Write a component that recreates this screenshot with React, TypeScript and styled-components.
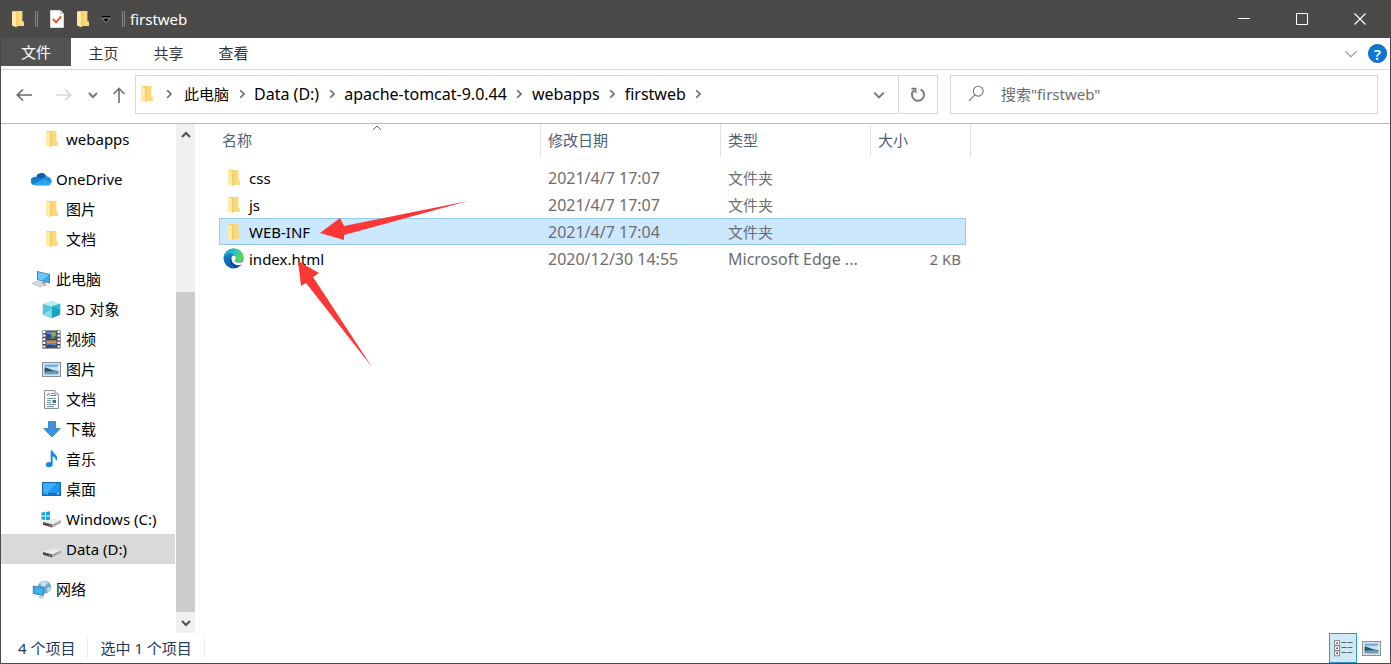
import React from 'react';
import styled, { createGlobalStyle, css } from 'styled-components';

const GlobalStyle = createGlobalStyle`
  *, *::before, *::after { box-sizing: border-box; }
  body { margin: 0; background: #fff; }
  body, button, input, table {
    font-family: 'Noto Sans', 'Noto Sans CJK SC', sans-serif;
    font-size: 15px;
    line-height: 20px;
  }
  button { padding: 0; border: 0; background: none; color: inherit; cursor: default; }
  a { color: inherit; text-decoration: none; }
  svg { display: block; flex: none; }
`;

const chrome = '#4c4a48';

const Window = styled.div`
  display: flex;
  flex-direction: column;
  min-height: 100vh;
  border: 1px solid ${chrome};
  border-top: 0;
  background: #fff;
  color: #000;
`;

const TitleBar = styled.header`
  display: flex;
  align-items: center;
  height: 38px;
  padding: 0 2px 0 11px;
  margin: 0 -1px;
  background: ${chrome};
  color: #fff;
`;

const QuickTools = styled.div`
  display: flex;
  align-items: center;
  gap: 12px;
  padding-left: 10px;
`;

const IconButton = styled.button`
  display: flex;
  align-items: center;
  justify-content: center;
`;

const TitleRule = styled.span`
  width: 3px;
  height: 16px;
  border: solid #85837f;
  border-width: 0 1px;
`;

const Title = styled.h1`
  flex: 1;
  margin: 0 0 0 5px;
  font-size: 15px;
  font-weight: 400;
`;

const CaptionButton = styled(IconButton)`
  width: 58px;
  height: 38px;
`;

const Ribbon = styled.nav`
  display: flex;
  height: 32px;
  border-bottom: 1px solid #dadbdc;
`;

const Tab = styled.button<{ $file?: boolean }>`
  width: ${(p) => (p.$file ? 70 : 65)}px;
  height: ${(p) => (p.$file ? 28 : 30)}px;
  color: ${(p) => (p.$file ? '#fff' : '#333')};
  background: ${(p) => (p.$file ? '#555351' : 'transparent')};
`;

const RibbonEnd = styled.div`
  display: flex;
  align-items: center;
  gap: 10px;
  margin-left: auto;
  padding-right: 3px;
`;

const HelpButton = styled(IconButton)`
  width: 19px;
  height: 19px;
  border-radius: 50%;
  border: 1px solid #0b5cad;
  background: #0a78d6;
  color: #fff;
  font-weight: 600;
`;

const NavigationBar = styled.div`
  display: flex;
  align-items: center;
  height: 54px;
  padding: 0 12px 4px 0;
  border-bottom: 1px solid #b9b9b9;
`;

const HistoryButtons = styled.div`
  display: flex;
  align-items: center;
  width: 134px;
  padding-left: 14px;
`;

const HistoryButton = styled(IconButton)<{ $gap?: number }>`
  height: 30px;
  margin-left: ${(p) => p.$gap ?? 0}px;
`;

const AddressBox = styled.div`
  display: flex;
  flex: 801 1 0;
  min-width: 0;
  height: 39px;
  border: 1px solid #d9d9d9;
`;

const Crumbs = styled.div`
  display: flex;
  align-items: center;
  flex: 1;
  min-width: 0;
  padding: 0 0 2px 4px;
  overflow: hidden;
  white-space: nowrap;
`;

const Crumb = styled.a<{ $latin: boolean }>`
  font-size: ${(p) => (p.$latin ? 16 : 15)}px;
`;

const CrumbChevron = styled.span<{ $wide?: boolean }>`
  display: flex;
  flex: none;
  justify-content: center;
  width: ${(p) => (p.$wide ? 30 : 25)}px;
`;

const AddressButton = styled(IconButton)<{ $ruled?: boolean }>`
  width: 39px;
  ${(p) => p.$ruled && css`border-left: 1px solid #d9d9d9;`}
`;

const SearchBox = styled.label`
  display: flex;
  align-items: center;
  gap: 16px;
  flex: 392 1 0;
  min-width: 0;
  height: 39px;
  margin-left: 12px;
  padding: 0 17px 2px;
  border: 1px solid #d9d9d9;
`;

const SearchInput = styled.input`
  flex: 1;
  min-width: 0;
  padding: 0;
  border: 0;
  outline: 0;
  background: none;
  &::placeholder { color: #6d6d6d; opacity: 1; }
`;

const Content = styled.main`
  display: flex;
  flex: 1;
`;

const Sidebar = styled.nav`
  width: 174px;
  flex: none;
  padding-bottom: 28px;
`;

const Group = styled.ul`
  margin: 0;
  padding: 0;
  list-style: none;
  & + & { margin-top: 10px; }
`;

const TreeLink = styled.a<{ $level: number; $selected?: boolean }>`
  display: flex;
  align-items: center;
  gap: 4px;
  height: 30px;
  padding-left: ${(p) => (p.$level === 0 ? 30 : 40)}px;
  background: ${(p) => (p.$selected ? '#d9d9d9' : 'transparent')};
  white-space: nowrap;
`;

const TreeIcon = styled.span`
  display: flex;
  justify-content: center;
  width: 21px;
`;

const ScrollBar = styled.div`
  display: flex;
  flex-direction: column;
  flex: none;
  width: 19px;
  margin-left: 1px;
  background: #f0f0f0;
`;

const ScrollButton = styled(IconButton)`
  height: 21px;
`;

const ScrollGap = styled.div`
  flex: 147 0 0;
`;

const ScrollThumb = styled.div`
  flex: 321 0 0;
  background: #cdcdcd;
`;

const FilePane = styled.section`
  position: relative;
  flex: 1;
  min-width: 0;
  margin-left: 4px;
  padding-left: 14px;
  border-left: 1px solid #f7f7f7;
`;

const FileTable = styled.table`
  width: 757px;
  table-layout: fixed;
  border-spacing: 0;
  tbody::before { content: ''; display: block; height: 7px; }
`;

const HeadCell = styled.th`
  position: relative;
  height: 33px;
  padding: 0 0 2px 7px;
  border-right: 1px solid #e2e2e2;
  color: #4c607a;
  font-weight: 400;
  text-align: left;
  &:first-child { padding-left: 8px; }
`;

const SortMark = styled.span`
  position: absolute;
  top: -1px;
  left: 0;
  right: 0;
  display: flex;
  justify-content: center;
`;

const FileRow = styled.tr<{ $selected?: boolean }>`
  td { height: 27px; padding: 0 0 0 7px; color: #6d6d6d; white-space: nowrap; }
  td:nth-child(2) { padding-left: 4px; color: #000; }
  td:first-child, td:last-child { padding: 0; }
  ${(p) =>
    p.$selected &&
    css`
      td:nth-child(n + 2) {
        background: #cce8ff;
        border: solid #99c9ec;
        border-width: 1px 0;
      }
      td:nth-child(2) { border-left-width: 1px; padding-left: 3px; }
      td:nth-child(5) { border-right-width: 1px; }
      td:last-child { background: none; border: 0; }
    `}
`;

const FileName = styled.span`
  display: flex;
  align-items: center;
  gap: 5px;
`;

const FileIcon = styled.span`
  display: flex;
  justify-content: center;
  width: 21px;
`;

const DetailCell = styled.td<{ $latin?: boolean }>`
  font-size: ${(p) => (p.$latin ? 16 : 15)}px;
`;

const SizeCell = styled.td`
  && { padding-right: 5px; text-align: right; }
`;

const Annotations = styled.svg`
  position: absolute;
  top: 76px;
  left: 96px;
  pointer-events: none;
`;

const StatusBar = styled.footer`
  display: flex;
  align-items: center;
  height: 30px;
  padding: 0 5px;
  color: #1e395b;
`;

const StatusText = styled.span`
  padding: 0 12px;
  border-right: 1px solid #ececec;
`;

const ViewButtons = styled.div`
  display: flex;
  margin-left: auto;
`;

const ViewButton = styled(IconButton)<{ $active?: boolean }>`
  width: 28px;
  height: 30px;
  ${(p) => p.$active && css`border: 1px solid #2a9cc4; background: #cfe9f7;`}
`;

function FolderIcon() {
  return (
    <svg width="14" height="18" viewBox="0 0 14 18" aria-hidden="true">
      <path d="M2 1h9v15H2z" fill="#f3cb60" />
      <path d="M6 1h5.4v10.5L13 13v3H6z" fill="#fbd977" />
      <path d="M1 1.2 5.2 2.6v14.6L1 15.6z" fill="#ffeaa9" />
      <path d="M5.2 2.6v14.6L7 16V1.4z" fill="#f6cf69" />
      <path d="M10.6 11.3h2.2V16h-2.2z" fill="#f9dc8c" />
    </svg>
  );
}

function Chevron({ dir, size = 10, color = '#666', width = 1.6 }: { dir: 'right' | 'down' | 'up'; size?: number; color?: string; width?: number }) {
  const d = { right: 'M3.2 1.2 7 5 3.2 8.8', down: 'M1 3 5 7 9 3', up: 'M1 7 5 3 9 7' }[dir];
  return (
    <svg width={size} height={size} viewBox="0 0 10 10" fill="none" stroke={color} strokeWidth={(width * 10) / size} aria-hidden="true">
      <path d={d} />
    </svg>
  );
}

function CheckDocIcon() {
  return (
    <svg width="14" height="18" viewBox="0 0 14 18" aria-hidden="true">
      <path d="M.5.5h10l3 3v14H.5z" fill="#fff" stroke="#d8d8d8" />
      <path d="M10.5.5v3h3" fill="#ddd" stroke="#aaa" strokeWidth=".7" />
      <path d="m3 9 3 3.3 5.2-6" fill="none" stroke="#d9552b" strokeWidth="1.9" />
    </svg>
  );
}

function CustomizeIcon() {
  return (
    <svg width="8" height="7" viewBox="0 0 8 7" aria-hidden="true">
      <path d="M0 .6h8" stroke="#000" strokeWidth="1.2" />
      <path d="M.3 2.2h7.4L4 6.8z" fill="#000" stroke="#ccc" strokeWidth=".6" />
    </svg>
  );
}

function ArrowIcon({ dir, color }: { dir: 'left' | 'right' | 'up'; color: string }) {
  const d = {
    left: 'M17 9H2M8 3.500 2.300 9 8 14.500',
    right: 'M1 9h15M10 3.500 15.700 9 10 14.500',
    up: 'M9 17V2M3.6 8 9 2.4 14.4 8',
  }[dir];
  return (
    <svg width="18" height="18" viewBox="0 0 18 18" fill="none" stroke={color} strokeWidth="1.7" aria-hidden="true">
      <path d={d} />
    </svg>
  );
}

function RefreshIcon() {
  return (
    <svg width="16" height="17" viewBox="0 0 16 17" fill="none" stroke="#7a7a7a" strokeWidth="2" aria-hidden="true">
      <path d="M10.6 3.4A6 6 0 1 1 4.4 4" />
      <path d="M1.4 2.6h4.2v4.4" strokeWidth="1.6" />
    </svg>
  );
}

function SearchIcon() {
  return (
    <svg width="17" height="17" viewBox="0 0 17 17" fill="none" stroke="#767676" strokeWidth="1.1" aria-hidden="true">
      <circle cx="10.3" cy="6.2" r="4.9" />
      <path d="M6.9 9.8.9 15.8" />
    </svg>
  );
}

function CloudIcon() {
  return (
    <svg width="21" height="14" viewBox="0 0 21 14" aria-hidden="true">
      <path d="M5.2 5A5.3 5.3 0 0 1 15 3.6l1 2.2-5 3-6-3.8z" fill="#0f5fb5" />
      <path d="M4.8 4.9c1.4-.2 2.6.1 3.8.8l5 3.1L3 13.2A4.2 4.2 0 0 1 4.8 4.9z" fill="#1380cf" />
      <path d="M14.9 4.6c3.2-.2 5.6 1.8 5.8 4.3.1 1-.3 2-.8 2.8l-8.8-4.5c1-1.500 2.200-2.400 3.800-2.600z" fill="#1a93e0" />
      <path d="m2 12.300 9.300-5c2.800 1.200 5.600 2.800 8.500 4.600-.7 1-1.800 1.500-3 1.500H4.600c-1 0-1.900-.4-2.600-1.100z" fill="#2ba3ee" />
    </svg>
  );
}

function ComputerIcon() {
  return (
    <svg width="21" height="18" viewBox="0 0 21 18" aria-hidden="true">
      <path d="m6 1 13 3v9.600L6 10z" fill="#4f7fa3" />
      <path d="m7 2.200 11 2.600v7.500L7 9.200z" fill="#38a9f0" />
      <path d="m7 2.200 11 2.600-7 5.600-4-1.200z" fill="#6cc6fa" />
      <path d="m11 11.500 4 1.200-.5 1.800-3.500-1z" fill="#8f9aa3" />
      <path d="m1 13.500 5-2.300 8.500 2.800-5 3z" fill="#d5dadd" stroke="#a8afb4" strokeWidth=".6" />
      <path d="m12.500 14 3.500.6-1.400 1.600-3-.6z" fill="#b9c0c5" />
    </svg>
  );
}

function CubeIcon() {
  return (
    <svg width="19" height="19" viewBox="0 0 19 19" aria-hidden="true">
      <path d="m.8 3.700 8.700-3 8.700 3-8.700 2.800z" fill="#b9eef5" />
      <path d="M.8 3.700 9.500 6.500v11.800L.8 14.800z" fill="#56c5dc" />
      <path d="m18.200 3.700-8.700 2.800v11.800l8.700-3.500z" fill="#14a5c5" />
      <path d="M.8 14.800 9.500 9v9.300z" fill="#85dbe9" />
      <path d="m9.500 6.500 8.700-2.800v6z" fill="#3ab9d3" />
    </svg>
  );
}

function FilmIcon() {
  return (
    <svg width="19" height="19" viewBox="0 0 19 19" aria-hidden="true">
      <path d="M.5.5h18v18H.5z" fill="#3c3c3c" />
      <path d="M2.300 1v18M16.700 1v18" stroke="#fff" strokeWidth="2.400" strokeDasharray="2.200 1.400" />
      <path d="M4.500 1.500h10v7h-10zM4.500 10.500h10v7h-10z" fill="#5b86cb" />
      <path d="M4.500 4.200c3-2 5 3.200 10 1v3.300h-10z" fill="#33478c" />
      <circle cx="11.500" cy="4.600" r="2.400" fill="#a6a64a" />
      <path d="m8 8.500 2.500-3L14 8.500z" fill="#6c9b3d" />
      <path d="M4.500 10.500h10v2.800c-4-1.500-7 2-10-1z" fill="#c78b4c" />
      <path d="M4.500 15.500c4-2.500 6 1 10-.5v2.500h-10z" fill="#30457f" />
    </svg>
  );
}

function PictureIcon() {
  return (
    <svg width="19" height="15" viewBox="0 0 19 15" aria-hidden="true">
      <path d="M.6.6h17.800v13.800H.6z" fill="#fff" stroke="#858f98" strokeWidth="1.200" />
      <path d="M2.500 2.500h14v10h-14z" fill="#c4e2f5" />
      <path d="M2.500 2.500h14v1.800c-3 .8-8 .6-14 .2z" fill="#6ca8df" />
      <path d="M2.500 5.500c4 0 6 2.800 14 3.800v1.200h-14z" fill="#2c5b68" />
      <path d="M2.500 10c4-1.200 9-.8 14-.5v3h-14z" fill="#6f9cb3" />
    </svg>
  );
}

function DocumentIcon() {
  return (
    <svg width="15" height="19" viewBox="0 0 15 19" aria-hidden="true">
      <path d="M.6.6h10.200l3.600 3.600v14.200H.6z" fill="#fff" stroke="#7f8790" />
      <path d="M10.800.6v3.600h3.600" fill="#dfe5ea" stroke="#7f8790" strokeWidth=".8" />
      <path d="m3 6 1.500-3L6 6M7 3.500h3M7 5.500h5" fill="none" stroke="#3c8ecb" />
      <path d="M3 8.500h9M3 10.500h4M3 12.500h4M3 14.500h9M3 16.500h7" stroke="#7497b4" />
      <path d="M8.500 10h3.500v3H8.500z" fill="#486f8b" />
    </svg>
  );
}

function DownloadIcon() {
  return (
    <svg width="18" height="17" viewBox="0 0 18 17" aria-hidden="true">
      <path d="M5.500.6h7v7h4.700L9 16 .8 7.600h4.700z" fill="#3d91e0" stroke="#2d77bd" strokeWidth=".8" />
    </svg>
  );
}

function MusicIcon() {
  return (
    <svg width="13" height="18" viewBox="0 0 13 18" aria-hidden="true">
      <ellipse cx="4.200" cy="14.600" rx="3.400" ry="2.700" fill="#1689e6" />
      <path d="M5.700.5h1.900c.2 3 4.600 4 4.600 7.500 0 1.300-.5 2.500-1.300 3.300.3-2.500-.8-4-3.300-5v8.300H5.700z" fill="#1689e6" />
    </svg>
  );
}

function DesktopIcon() {
  return (
    <svg width="19" height="14" viewBox="0 0 19 14" aria-hidden="true">
      <path d="M.6.6h17.800v12.800H.6z" fill="#1d97f2" stroke="#1369ad" strokeWidth="1.200" />
      <path d="M1.200 1.200h13l-9 9.500h-4z" fill="#43b0fa" />
      <path d="M1.200 11.700h16.600" stroke="#0b5a9a" />
      <path d="M2.500 11.700h1M5 11.700h1M15 11.700h2" stroke="#e6f4ff" />
    </svg>
  );
}

function DriveIcon({ system }: { system?: boolean }) {
  return (
    <svg width="21" height="18" viewBox="0 0 21 18" aria-hidden="true">
      {system && <path d="M.5 2.500 4.200 2v3.600H.5zM5 1.900 9 1.200v4.400H5zM.5 6.400h3.700V10L.5 9.500zM5 6.400h4v4.400L5 10.100z" fill="#16a5dc" />}
      <path d="m2 12 10-3.500 8 1.800-9 4.200z" fill="#ececec" />
      <path d="m2 12 9 2.500v3L2 14.800z" fill="#4a4a4a" />
      <path d="m11 14.500 9-4.200v2.700l-9 4.500z" fill="#a9a9a9" />
      <path d="m8.500 15.500 1.300.4" stroke="#a8e080" />
    </svg>
  );
}

function NetworkIcon() {
  return (
    <svg width="20" height="19" viewBox="0 0 20 19" aria-hidden="true">
      <circle cx="12.500" cy="7.200" r="6.500" fill="#73a9c9" />
      <path d="M8 3c3-2.500 6-2 8 0-1 2-2 1-3 3s-4 0-5-3zM15 8l3.500-1c0 2-1 4-3 5.200z" fill="#c4e0ec" />
      <path d="m.8 5.800 11.400 1.500-.5 8.700L.8 13.800z" fill="#2c7dab" />
      <path d="m1.600 6.800 9.700 1.300-.4 6.600-9.300-1.800z" fill="#3fb0ee" />
      <path d="m5.500 16.500 4-.8 3.300 1.200-4 1.800z" fill="#b9cbd7" />
    </svg>
  );
}

function EdgeIcon() {
  return (
    <svg width="21" height="21" viewBox="0 0 21 21" aria-hidden="true">
      <defs>
        <linearGradient id="edgeTop" x1="0" y1="0" x2="1" y2=".5">
          <stop offset="0" stopColor="#1a94d2" />
          <stop offset=".5" stopColor="#2cc0c4" />
          <stop offset="1" stopColor="#62d455" />
        </linearGradient>
        <linearGradient id="edgeLeft" x1="0" y1="0" x2=".3" y2="1">
          <stop offset="0" stopColor="#1a8fd8" />
          <stop offset="1" stopColor="#0d5db4" />
        </linearGradient>
      </defs>
      <circle cx="10.500" cy="10.500" r="10" fill="url(#edgeLeft)" />
      <path d="M.8 8.800C2 3.800 6 .5 10.800.5c5.700 0 9.700 4.300 9.700 8.700 0 3.300-2.300 5.300-5.400 5.300-2.300 0-3.700-.8-3.700-1.700 0-.8 1.300-1.200 1.300-3.200 0-2.400-2.400-4.200-5.500-4.200-2.600 0-5 1.300-6.400 3.400z" fill="url(#edgeTop)" />
      <path d="M9.500 8.500c-2 1-2.700 2.700-2.700 4.500 0 3.600 3.200 6.600 7 6.600 2.300-.8 4.200-2.300 5.400-4.300-4.500 2.300-9-.2-9.700-3-.3-1.300-.3-2.700 0-3.800z" fill="#104a96" />
      <path d="M8.800 8.500c1.500-1.700 4-1 4 1.200 0 1.500-1.200 2-1.200 3 0 1.200 1.900 2 4 2 1.800 0 3.600-.6 5-2v1.200l-1.300 2.400c-3.500 1.500-7.500.9-9.300-1.200-1.500-1.700-1.900-4.700-1.200-6.600z" fill="#fff" />
    </svg>
  );
}

function DetailsIcon() {
  return (
    <svg width="19" height="17" viewBox="0 0 19 17" fill="none" aria-hidden="true">
      <path d="M.6.6h5v5h-5zM.6 5.700h5v5h-5zM.6 10.800h5v5h-5z" fill="#fff" stroke="#777" strokeWidth=".9" />
      <path d="M2.400 3.200h1.400M2.400 8.300h1.400M2.400 13.300h1.400" stroke="#222" strokeWidth="1.400" />
      <path d="M7.500 2.500h5M13.500 2.500h5M7.500 7.500h5M13.500 7.500h5M7.500 12.500h5M13.500 12.500h5" stroke="#5a646b" />
    </svg>
  );
}

type Node = { label: string; icon: React.ReactNode; level: number; selected?: boolean };

const tree: Node[][] = [
  [{ label: 'webapps', icon: <FolderIcon />, level: 1 }],
  [
    { label: 'OneDrive', icon: <CloudIcon />, level: 0 },
    { label: '图片', icon: <FolderIcon />, level: 1 },
    { label: '文档', icon: <FolderIcon />, level: 1 },
  ],
  [
    { label: '此电脑', icon: <ComputerIcon />, level: 0 },
    { label: '3D 对象', icon: <CubeIcon />, level: 1 },
    { label: '视频', icon: <FilmIcon />, level: 1 },
    { label: '图片', icon: <PictureIcon />, level: 1 },
    { label: '文档', icon: <DocumentIcon />, level: 1 },
    { label: '下载', icon: <DownloadIcon />, level: 1 },
    { label: '音乐', icon: <MusicIcon />, level: 1 },
    { label: '桌面', icon: <DesktopIcon />, level: 1 },
    { label: 'Windows (C:)', icon: <DriveIcon system />, level: 1 },
    { label: 'Data (D:)', icon: <DriveIcon />, level: 1, selected: true },
  ],
  [{ label: '网络', icon: <NetworkIcon />, level: 0 }],
];

const files = [
  { name: 'css', date: '2021/4/7 17:07', type: '文件夹', size: '' },
  { name: 'js', date: '2021/4/7 17:07', type: '文件夹', size: '' },
  { name: 'WEB-INF', date: '2021/4/7 17:04', type: '文件夹', size: '', selected: true },
  { name: 'index.html', date: '2020/12/30 14:55', type: 'Microsoft Edge ...', size: '2 KB', html: true },
];

const crumbs = ['此电脑', 'Data (D:)', 'apache-tomcat-9.0.44', 'webapps', 'firstweb'];

const isLatin = (text: string) => /^[\x20-\x7e]*$/.test(text);

export default function App() {
  return (
    <>
      <GlobalStyle />
      <Window>
        <TitleBar>
          <FolderIcon />
          <QuickTools>
            <TitleRule />
            <IconButton aria-label="属性"><CheckDocIcon /></IconButton>
            <IconButton aria-label="新建文件夹"><FolderIcon /></IconButton>
            <IconButton aria-label="自定义快速访问工具栏"><CustomizeIcon /></IconButton>
            <TitleRule />
          </QuickTools>
          <Title>firstweb</Title>
          <CaptionButton aria-label="最小化">
            <svg width="12" height="12" stroke="#fff"><path d="M0 5.500h12" /></svg>
          </CaptionButton>
          <CaptionButton aria-label="最大化">
            <svg width="12" height="12" fill="none" stroke="#fff"><path d="M.5.500h11v11H.5z" /></svg>
          </CaptionButton>
          <CaptionButton aria-label="关闭">
            <svg width="12" height="12" stroke="#fff" strokeWidth="1.200"><path d="m.5.500 11 11M11.500.500l-11 11" /></svg>
          </CaptionButton>
        </TitleBar>

        <Ribbon>
          <Tab $file>文件</Tab>
          <Tab>主页</Tab>
          <Tab>共享</Tab>
          <Tab>查看</Tab>
          <RibbonEnd>
            <IconButton aria-label="展开功能区"><Chevron dir="down" size={14} color="#a8a8a8" width={1.4} /></IconButton>
            <HelpButton aria-label="帮助">?</HelpButton>
          </RibbonEnd>
        </Ribbon>

        <NavigationBar>
          <HistoryButtons>
            <HistoryButton aria-label="后退"><ArrowIcon dir="left" color="#6a6a6a" /></HistoryButton>
            <HistoryButton $gap={22} aria-label="前进"><ArrowIcon dir="right" color="#d5d5d5" /></HistoryButton>
            <HistoryButton $gap={15} aria-label="最近位置"><Chevron dir="down" color="#777" width={2} /></HistoryButton>
            <HistoryButton $gap={12} aria-label="上移"><ArrowIcon dir="up" color="#777" /></HistoryButton>
          </HistoryButtons>
          <AddressBox>
            <Crumbs>
              <FolderIcon />
              <CrumbChevron $wide><Chevron dir="right" /></CrumbChevron>
              {crumbs.map((crumb) => (
                <React.Fragment key={crumb}>
                  <Crumb href="#" $latin={isLatin(crumb)}>{crumb}</Crumb>
                  <CrumbChevron><Chevron dir="right" /></CrumbChevron>
                </React.Fragment>
              ))}
            </Crumbs>
            <AddressButton aria-label="以前的位置"><Chevron dir="down" size={12} color="#777" width={2} /></AddressButton>
            <AddressButton $ruled aria-label="刷新"><RefreshIcon /></AddressButton>
          </AddressBox>
          <SearchBox>
            <SearchIcon />
            <SearchInput type="text" aria-label="搜索" placeholder={'搜索"firstweb"'} />
          </SearchBox>
        </NavigationBar>

        <Content>
          <Sidebar>
            {tree.map((group, i) => (
              <Group key={i}>
                {group.map((node) => (
                  <li key={node.label}>
                    <TreeLink href="#" $level={node.level} $selected={node.selected}>
                      <TreeIcon>{node.icon}</TreeIcon>
                      {node.label}
                    </TreeLink>
                  </li>
                ))}
              </Group>
            ))}
          </Sidebar>
          <ScrollBar>
            <ScrollButton aria-label="向上滚动"><Chevron dir="up" color="#505050" width={2} /></ScrollButton>
            <ScrollGap />
            <ScrollThumb />
            <ScrollButton aria-label="向下滚动"><Chevron dir="down" color="#505050" width={2} /></ScrollButton>
          </ScrollBar>

          <FilePane>
            <FileTable>
              <colgroup>
                <col style={{ width: 5 }} />
                <col style={{ width: 322 }} />
                <col style={{ width: 180 }} />
                <col style={{ width: 150 }} />
                <col style={{ width: 95 }} />
                <col style={{ width: 5 }} />
              </colgroup>
              <thead>
                <tr>
                  <HeadCell scope="col" colSpan={2}>
                    <SortMark><Chevron dir="up" color="#666" width={1} /></SortMark>
                    名称
                  </HeadCell>
                  <HeadCell scope="col">修改日期</HeadCell>
                  <HeadCell scope="col">类型</HeadCell>
                  <HeadCell scope="col" colSpan={2}>大小</HeadCell>
                </tr>
              </thead>
              <tbody>
                {files.map((file) => (
                  <FileRow key={file.name} $selected={file.selected}>
                    <td />
                    <td>
                      <FileName>
                        <FileIcon>{file.html ? <EdgeIcon /> : <FolderIcon />}</FileIcon>
                        {file.name}
                      </FileName>
                    </td>
                    <DetailCell $latin>{file.date}</DetailCell>
                    <DetailCell $latin={isLatin(file.type)}>{file.type}</DetailCell>
                    <SizeCell>{file.size}</SizeCell>
                    <td />
                  </FileRow>
                ))}
              </tbody>
            </FileTable>
            <Annotations width="174" height="170" viewBox="-21 0 174 170" fill="#fd3735" aria-hidden="true">
              <path d="m3 33 20-15 4 8 124-25L27 35v5z" />
              <path d="m-19 61 21 12-6 4 59 90-66-84-5 3z" />
            </Annotations>
          </FilePane>
        </Content>

        <StatusBar>
          <StatusText>4 个项目</StatusText>
          <StatusText>选中 1 个项目</StatusText>
          <ViewButtons>
            <ViewButton $active aria-label="详细信息"><DetailsIcon /></ViewButton>
            <ViewButton aria-label="大图标"><PictureIcon /></ViewButton>
          </ViewButtons>
        </StatusBar>
      </Window>
    </>
  );
}
